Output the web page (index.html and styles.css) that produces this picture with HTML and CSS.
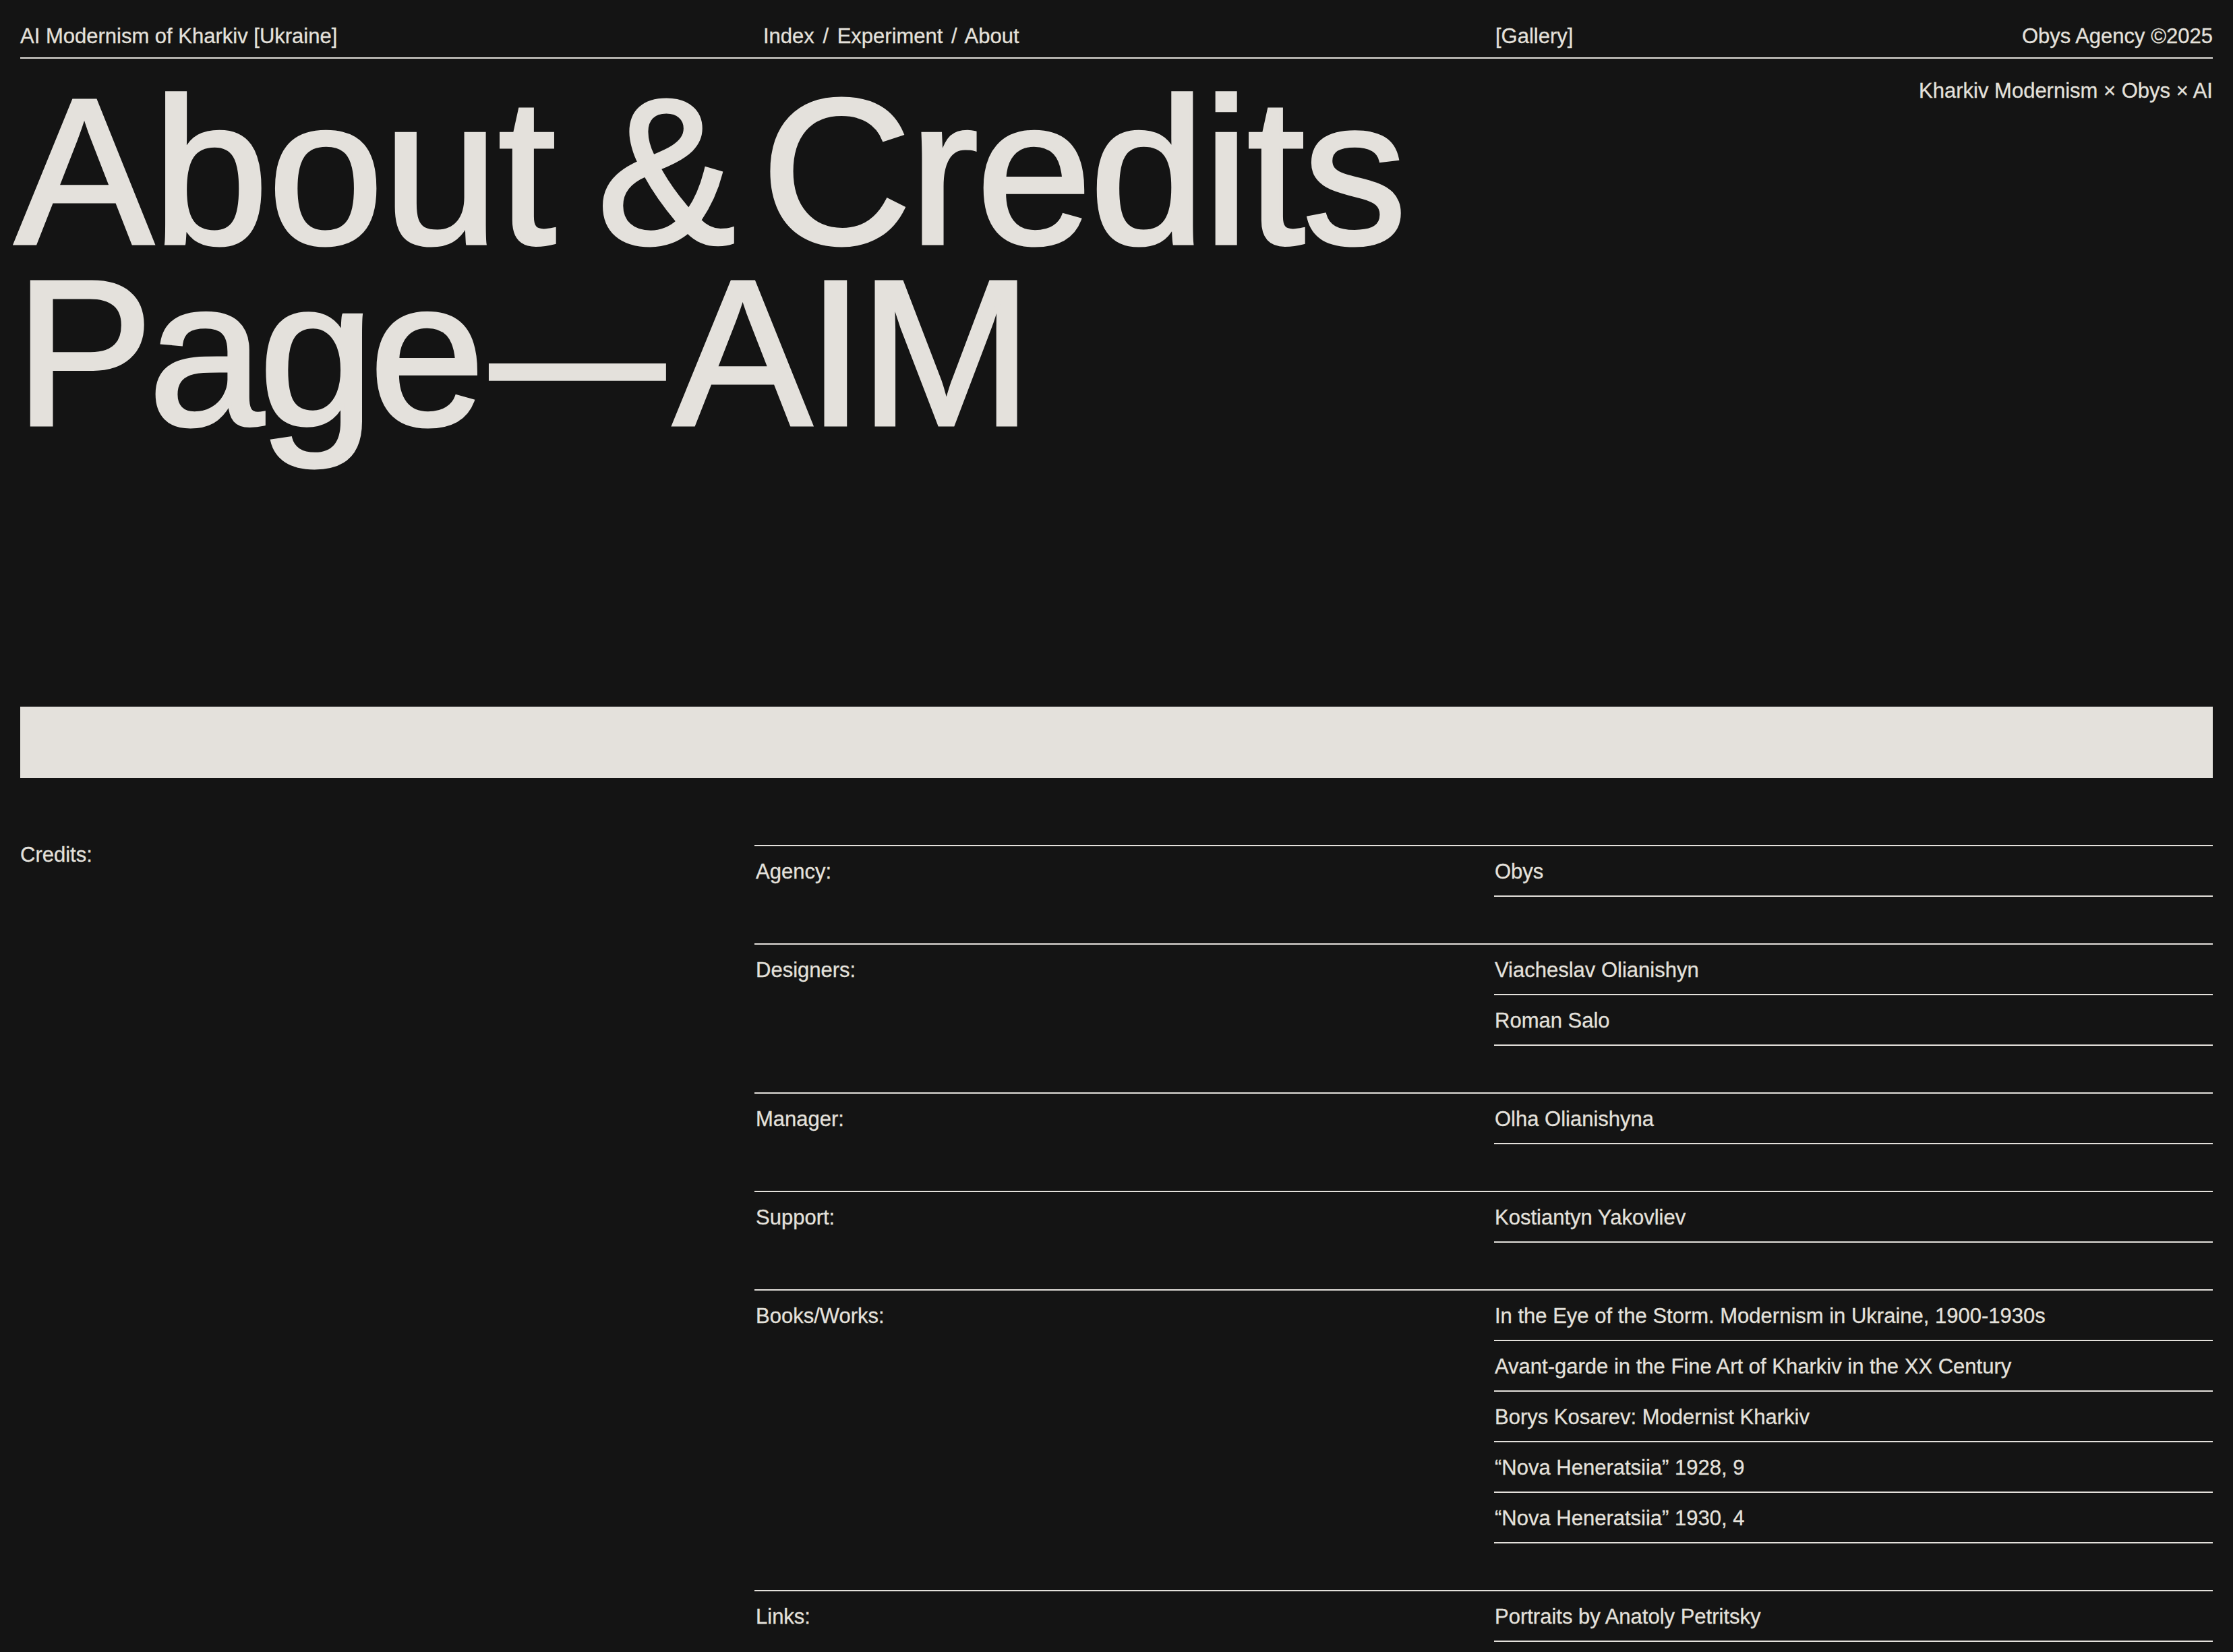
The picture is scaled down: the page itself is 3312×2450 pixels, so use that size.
FILE: index.html
```html
<!DOCTYPE html>
<html lang="en">
<head>
<meta charset="utf-8">
<title>About &amp; Credits Page — AIM</title>
<link rel="stylesheet" href="styles.css">
</head>
<body>
<div class="page">
  <header class="topbar">
    <div class="topbar__title">AI Modernism of Kharkiv [Ukraine]</div>
    <nav class="topbar__nav">Index / Experiment / About</nav>
    <div class="topbar__gallery">[Gallery]</div>
    <div class="topbar__copy">Obys Agency ©2025</div>
  </header>

  <section class="hero">
    <h1 class="hero__title">
      <span class="hero__line hero__line--first">About <span class="hero__amp">&amp;</span> <span class="hero__word">Credits</span></span>
      <span class="hero__line hero__line--second">Page<span class="hero__dash">—</span>AIM</span>
    </h1>
    <div class="hero__sub">Kharkiv Modernism × Obys × AI</div>
  </section>

  <div class="bar"></div>

  <section class="credits">
    <div class="credits__label">Credits:</div>
    <div class="credits__table">
      <div class="row">
        <div class="row__label">Agency:</div>
        <ul class="row__values">
          <li class="item">Obys</li>
        </ul>
      </div>
      <div class="row">
        <div class="row__label">Designers:</div>
        <ul class="row__values">
          <li class="item">Viacheslav Olianishyn</li>
          <li class="item">Roman Salo</li>
        </ul>
      </div>
      <div class="row">
        <div class="row__label">Manager:</div>
        <ul class="row__values">
          <li class="item">Olha Olianishyna</li>
        </ul>
      </div>
      <div class="row">
        <div class="row__label">Support:</div>
        <ul class="row__values">
          <li class="item">Kostiantyn Yakovliev</li>
        </ul>
      </div>
      <div class="row">
        <div class="row__label">Books/Works:</div>
        <ul class="row__values">
          <li class="item">In the Eye of the Storm. Modernism in Ukraine, 1900-1930s</li>
          <li class="item">Avant-garde in the Fine Art of Kharkiv in the XX Century</li>
          <li class="item">Borys Kosarev: Modernist Kharkiv</li>
          <li class="item">“Nova Heneratsiia” 1928, 9</li>
          <li class="item">“Nova Heneratsiia” 1930, 4</li>
        </ul>
      </div>
      <div class="row">
        <div class="row__label">Links:</div>
        <ul class="row__values">
          <li class="item">Portraits by Anatoly Petritsky</li>
        </ul>
      </div>
    </div>
  </section>
</div>
</body>
</html>
```
FILE: styles.css
```css
html, body {
  margin: 0;
  padding: 0;
  background: #141414;
}

body {
  color: #e4e1dc;
  font-family: "Liberation Sans", Arial, Helvetica, sans-serif;
  font-size: 31px;
  line-height: 37px;
  -webkit-text-stroke: 0.3px #e4e1dc;
}

.page {
  padding: 0 30px 120px;
}

/* Header */
.topbar {
  display: grid;
  grid-template-columns: 1102px 1086px 1fr auto;
  padding: 35px 0 13px;
  border-bottom: 2px solid #e4e1dc;
}

.topbar__nav {
  word-spacing: 4px;
}

.topbar__copy {
  text-align: right;
}

/* Hero */
.hero {
  display: flex;
  justify-content: space-between;
  align-items: flex-start;
  padding-top: 29px;
  height: 961px;
  box-sizing: border-box;
}

.hero__title {
  margin: 4px 0 0 -8px;
  font-size: 308px;
  line-height: 269px;
  font-weight: 400;
  white-space: nowrap;
  -webkit-text-stroke: 5px #e4e1dc;
}

.hero__line {
  display: block;
}

.hero__line--first {
  letter-spacing: -0.002em;
  word-spacing: -0.15em;
}

.hero__amp {
  margin-left: 0.075em;
}

.hero__word {
  letter-spacing: -0.01em;
}

.hero__line--second {
  letter-spacing: -0.024em;
}

.hero__dash {
  display: inline-block;
  transform: scaleX(0.84);
  margin: 0 -0.015em 0 -0.03em;
}

.hero__sub {
  white-space: nowrap;
}

/* Bar */
.bar {
  height: 106px;
  background: #e4e1dc;
}

/* Credits */
.credits {
  display: grid;
  grid-template-columns: 1089px 1fr;
  align-items: start;
  margin-top: 95px;
}

.credits__table {
  margin-top: 4px;
}

.row {
  display: grid;
  grid-template-columns: 1097px 1fr;
  border-top: 2px solid #e4e1dc;
  padding-bottom: 69px;
}

.row__label {
  padding-top: 19px;
  padding-left: 2px;
}

.row__values {
  list-style: none;
  margin: 0;
  padding: 0;
}

.item {
  padding: 19px 0 17px 1px;
  border-bottom: 2px solid #e4e1dc;
}
```
